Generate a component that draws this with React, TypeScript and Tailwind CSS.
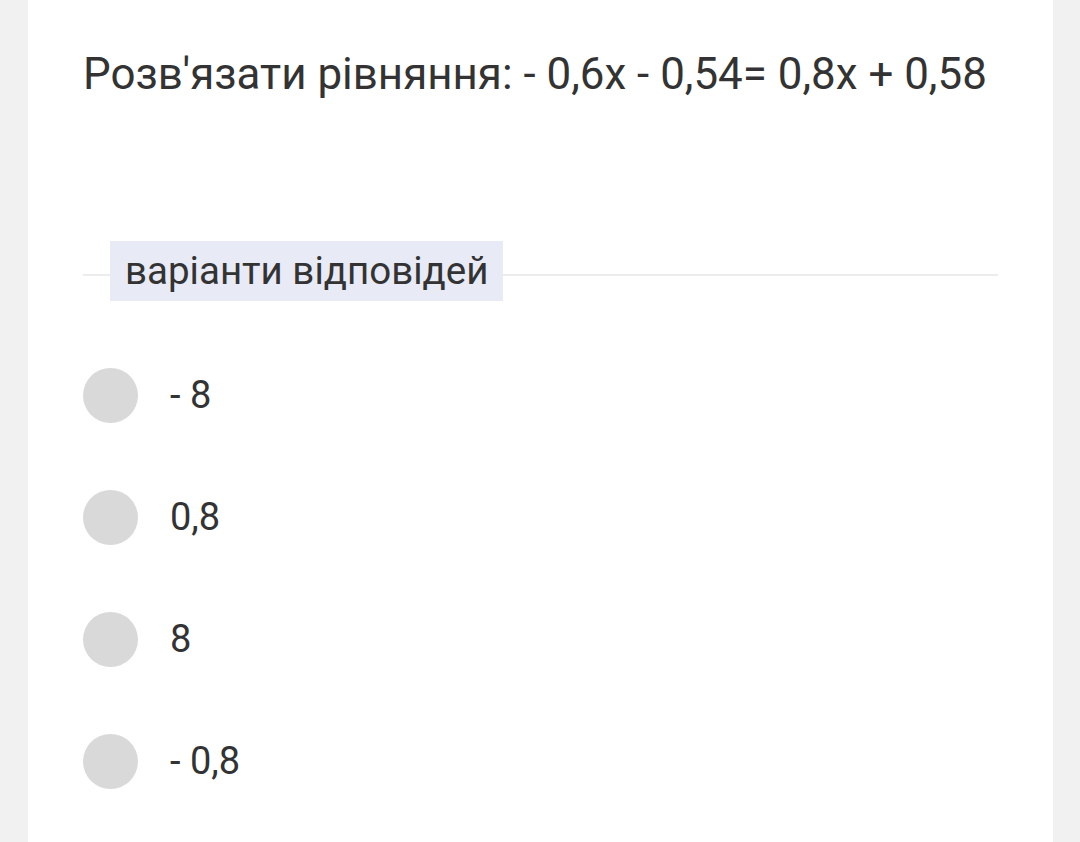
const options = ['- 8', '0,8', '8', '- 0,8'];

export default function App() {
  return (
    <div className="min-h-[842px] bg-[#f1f1f1] font-['Roboto',sans-serif] text-[#333333]">
      <div className="ml-[28px] w-[1025px] min-h-[842px] bg-white pl-[55px] pr-[55px] pt-[46px]">
        <h1 className="text-[43.9px] leading-[56px] font-normal whitespace-nowrap">
          Розв'язати рівняння: - 0,6х - 0,54= 0,8х + 0,58
        </h1>

        <div className="relative mt-[139px] flex items-center">
          <div className="absolute left-0 right-0 top-[33px] h-[2px] bg-[#ececec]" />
          <span className="relative ml-[27px] bg-[#e8eaf6] px-[15px] text-[38.5px] leading-[60px]">
            варіанти відповідей
          </span>
        </div>

        <div className="mt-[67px] flex flex-col gap-[67px]">
          {options.map((opt) => (
            <label key={opt} className="flex items-center gap-[32px]">
              <span className="h-[55px] w-[55px] shrink-0 rounded-full bg-[#d9d9d9]" />
              <span className="text-[38px] leading-[55px]">{opt}</span>
            </label>
          ))}
        </div>
      </div>
    </div>
  );
}
